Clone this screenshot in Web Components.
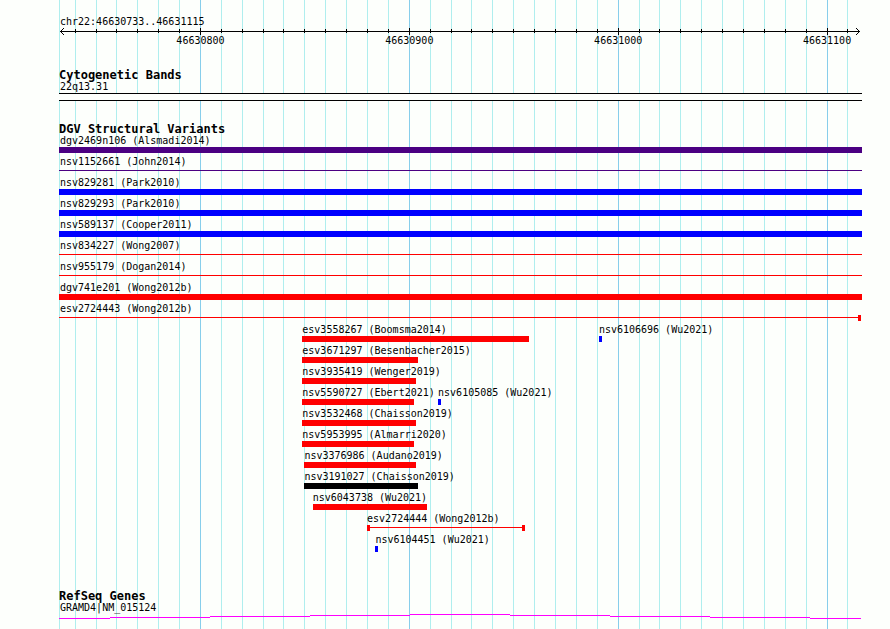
<!DOCTYPE html>
<html lang="en">
<head>
    <meta charset="UTF-8">
    <meta name="viewport" content="width=device-width, initial-scale=1.0">
    <title>chr22:46630733..46631115</title>
    <style>
        body {
            margin: 0;
            background: #fdfffc;
            color: #000;
            font: 10px/12px "DejaVu Sans Mono", "Liberation Mono", monospace;
        }
    </style>
</head>
<body>
    <genome-browser>
        <genome-ruler label="chr22:46630733..46631115"></genome-ruler>
        <genome-track heading="Cytogenetic Bands">
            <cyto-band>22q13.31</cyto-band>
        </genome-track>
        <genome-track heading="DGV Structural Variants" id="variants"></genome-track>
        <genome-track heading="RefSeq Genes" class="last">
            <gene-line>GRAMD4|NM_015124</gene-line>
        </genome-track>
    </genome-browser>
    <script>
        const START = 46630733;
        const SPAN = 383;

        // base position to a percentage of the plot width
        const percent = (pos) => (pos - START) / SPAN * 100;

        function attach(el, html) {
            el.attachShadow({ mode: 'open' }).innerHTML = html;
            return el.shadowRoot;
        }

        function eachTen(callback) {
            for (let pos = Math.ceil(START / 10) * 10; pos < START + SPAN; pos += 10) {
                callback(pos, pos % 100 === 0);
            }
        }

        class GenomeBrowser extends HTMLElement {
            constructor() {
                super();
                const root = attach(this, `
                    <style>
                        :host {
                            display: block;
                            position: relative;
                            box-sizing: border-box;
                            min-height: 100vh;
                            padding: 16px 28px 0 59px;
                        }
                        .grid {
                            position: absolute;
                            inset: 0 30px 0 59px;
                            border-left: 1px solid #afeeee;
                        }
                        .grid i {
                            position: absolute;
                            top: 0;
                            bottom: 0;
                            width: 1px;
                            background: #afeeee;
                        }
                        .grid i.major {
                            background: #87ceeb;
                        }
                        main {
                            position: relative;
                        }
                    </style>
                    <div class="grid"></div>
                    <main><slot></slot></main>
                `);
                const grid = root.querySelector('.grid');
                eachTen((pos, major) => {
                    const line = document.createElement('i');
                    line.style.left = percent(pos) + '%';
                    if (major) line.className = 'major';
                    grid.appendChild(line);
                });
            }
        }

        class GenomeRuler extends HTMLElement {
            constructor() {
                super();
                const root = attach(this, `
                    <style>
                        :host {
                            display: block;
                            padding: 0 2px 22px 1px;
                        }
                        .axis {
                            display: flex;
                            justify-content: space-between;
                            position: relative;
                            height: 19px;
                        }
                        .axis::before {
                            content: "";
                            position: absolute;
                            top: 3px;
                            left: 0;
                            right: 0;
                            height: 1px;
                            background: #000;
                        }
                        svg {
                            width: 4px;
                            height: 7px;
                            fill: none;
                            stroke: #000;
                        }
                        .tick {
                            position: absolute;
                            top: 1px;
                            display: flex;
                            flex-direction: column;
                            align-items: center;
                            width: 1px;
                        }
                        .tick.major {
                            top: 0;
                        }
                        .tick i {
                            width: 1px;
                            height: 4px;
                            background: #000;
                        }
                        .major i {
                            height: 7px;
                        }
                    </style>
                    <div class="name"></div>
                    <div class="axis">
                        <svg viewBox="0 0 4 7"><path d="M4 0 .5 3.5 4 7"/></svg>
                        <svg viewBox="0 0 4 7"><path d="M0 0 3.5 3.5 0 7"/></svg>
                    </div>
                `);
                const axis = root.querySelector('.axis');
                eachTen((pos, major) => {
                    const tick = document.createElement('div');
                    tick.className = major ? 'tick major' : 'tick';
                    tick.style.left = percent(pos) + '%';
                    tick.innerHTML = major ? `<i></i><span>${pos}</span>` : '<i></i>';
                    axis.appendChild(tick);
                });
            }

            connectedCallback() {
                this.shadowRoot.querySelector('.name').textContent = this.getAttribute('label');
            }
        }

        class GenomeTrack extends HTMLElement {
            constructor() {
                super();
                attach(this, `
                    <style>
                        :host {
                            display: block;
                            padding-bottom: 22px;
                        }
                        :host(#variants) {
                            padding-bottom: 35px;
                        }
                        :host(.last) {
                            padding-bottom: 0;
                        }
                        h2 {
                            margin: 0;
                            font-size: 12px;
                            line-height: 12px;
                        }
                    </style>
                    <h2></h2>
                    <slot></slot>
                `);
            }

            connectedCallback() {
                this.shadowRoot.querySelector('h2').textContent = this.getAttribute('heading');
            }
        }

        class CytoBand extends HTMLElement {
            constructor() {
                super();
                attach(this, `
                    <style>
                        :host { display: block; }
                        .label { padding-left: 1px; }
                        .band {
                            height: 6px;
                            border: solid #000;
                            border-width: 1px 0;
                            background: #fdfffc;
                        }
                    </style>
                    <div class="label"><slot></slot></div>
                    <div class="band"></div>
                `);
            }
        }

        // one line of the layout, its features share a single cell
        class FeatureRow extends HTMLElement {
            constructor() {
                super();
                attach(this, `
                    <style>
                        :host {
                            display: grid;
                            grid-template-columns: 100%;
                            padding: 0 2px 3px 1px;
                        }
                        ::slotted(*) { grid-area: 1 / 1; }
                    </style>
                    <slot></slot>
                `);
            }
        }

        class GenomeFeature extends HTMLElement {
            constructor() {
                super();
                attach(this, `
                    <style>
                        :host {
                            display: block;
                            white-space: nowrap;
                        }
                        .bar {
                            display: flex;
                            height: 6px;
                            background: var(--color);
                        }
                        :host([wide]) .bar { margin: 0 -1px; }
                        :host([thin]) .bar {
                            background: linear-gradient(var(--color), var(--color)) 0 2px / 100% 1px no-repeat;
                        }
                        :host([caps]) .bar { justify-content: space-between; }
                        :host([caps=end]) .bar {
                            justify-content: flex-end;
                            margin-right: 0;
                        }
                        .cap {
                            display: none;
                            width: 3px;
                            background: var(--color);
                        }
                        :host([caps]) .cap { display: block; }
                        :host([caps=end]) .cap.left { display: none; }
                    </style>
                    <slot></slot>
                    <div class="bar"><i class="cap left"></i><i class="cap"></i></div>
                `);
            }

            connectedCallback() {
                const start = Number(this.getAttribute('start'));
                const end = Number(this.getAttribute('end'));
                this.style.marginLeft = percent(start) + '%';
                this.style.width = `calc(${percent(end) - percent(start)}% + 1px)`;
                this.style.setProperty('--color', this.getAttribute('color'));
            }
        }

        class GeneLine extends HTMLElement {
            constructor() {
                super();
                const root = attach(this, `
                    <style>
                        :host { display: block; }
                        .label { padding-left: 1px; }
                        .line {
                            display: flex;
                            align-items: flex-start;
                            height: 5px;
                            margin-right: 1px;
                        }
                        .line i {
                            height: 1px;
                            background: #f0f;
                        }
                    </style>
                    <div class="label"><slot></slot></div>
                    <div class="line"></div>
                `);
                const line = root.querySelector('.line');
                [4, 3, 2, 1, 0, 1, 2, 3, 4].forEach((depth) => {
                    const part = document.createElement('i');
                    part.style.flex = depth === 4 ? '51 0 0' : '100 0 0';
                    part.style.marginTop = depth + 'px';
                    line.appendChild(part);
                });
            }
        }

        // name, color, start, end, extra attributes
        const FULL = [46630733, 46631116];
        const rows = [
            [['dgv2469n106 (Alsmadi2014)', 'indigo', ...FULL, 'wide']],
            [['nsv1152661 (John2014)', 'indigo', ...FULL, 'wide thin']],
            [['nsv829281 (Park2010)', 'blue', ...FULL, 'wide']],
            [['nsv829293 (Park2010)', 'blue', ...FULL, 'wide']],
            [['nsv589137 (Cooper2011)', 'blue', ...FULL, 'wide']],
            [['nsv834227 (Wong2007)', 'red', ...FULL, 'wide thin']],
            [['nsv955179 (Dogan2014)', 'red', ...FULL, 'wide thin']],
            [['dgv741e201 (Wong2012b)', 'red', ...FULL, 'wide']],
            [['esv2724443 (Wong2012b)', 'red', ...FULL, 'wide thin caps="end"']],
            [
                ['esv3558267 (Boomsma2014)', 'red', 46630849, 46630957],
                ['nsv6106696 (Wu2021)', 'blue', 46630991, 46630992]
            ],
            [['esv3671297 (Besenbacher2015)', 'red', 46630849, 46630904]],
            [['nsv3935419 (Wenger2019)', 'red', 46630849, 46630903]],
            [
                ['nsv5590727 (Ebert2021)', 'red', 46630849, 46630902],
                ['nsv6105085 (Wu2021)', 'blue', 46630914, 46630915]
            ],
            [['nsv3532468 (Chaisson2019)', 'red', 46630849, 46630903]],
            [['nsv5953995 (Almarri2020)', 'red', 46630849, 46630902]],
            [['nsv3376986 (Audano2019)', 'red', 46630850, 46630903]],
            [['nsv3191027 (Chaisson2019)', 'black', 46630850, 46630904]],
            [['nsv6043738 (Wu2021)', 'red', 46630854, 46630908]],
            [['esv2724444 (Wong2012b)', 'red', 46630880, 46630955, 'thin caps="both"']],
            [['nsv6104451 (Wu2021)', 'blue', 46630884, 46630885]]
        ];

        customElements.define('genome-browser', GenomeBrowser);
        customElements.define('genome-ruler', GenomeRuler);
        customElements.define('genome-track', GenomeTrack);
        customElements.define('cyto-band', CytoBand);
        customElements.define('feature-row', FeatureRow);
        customElements.define('genome-feature', GenomeFeature);
        customElements.define('gene-line', GeneLine);

        document.getElementById('variants').innerHTML = rows.map((row) => `<feature-row>${
            row.map(([name, color, start, end, extra = '']) =>
                `<genome-feature color="${color}" start="${start}" end="${end}" ${extra}>${name}</genome-feature>`
            ).join('')
        }</feature-row>`).join('');
    </script>
</body>
</html>
